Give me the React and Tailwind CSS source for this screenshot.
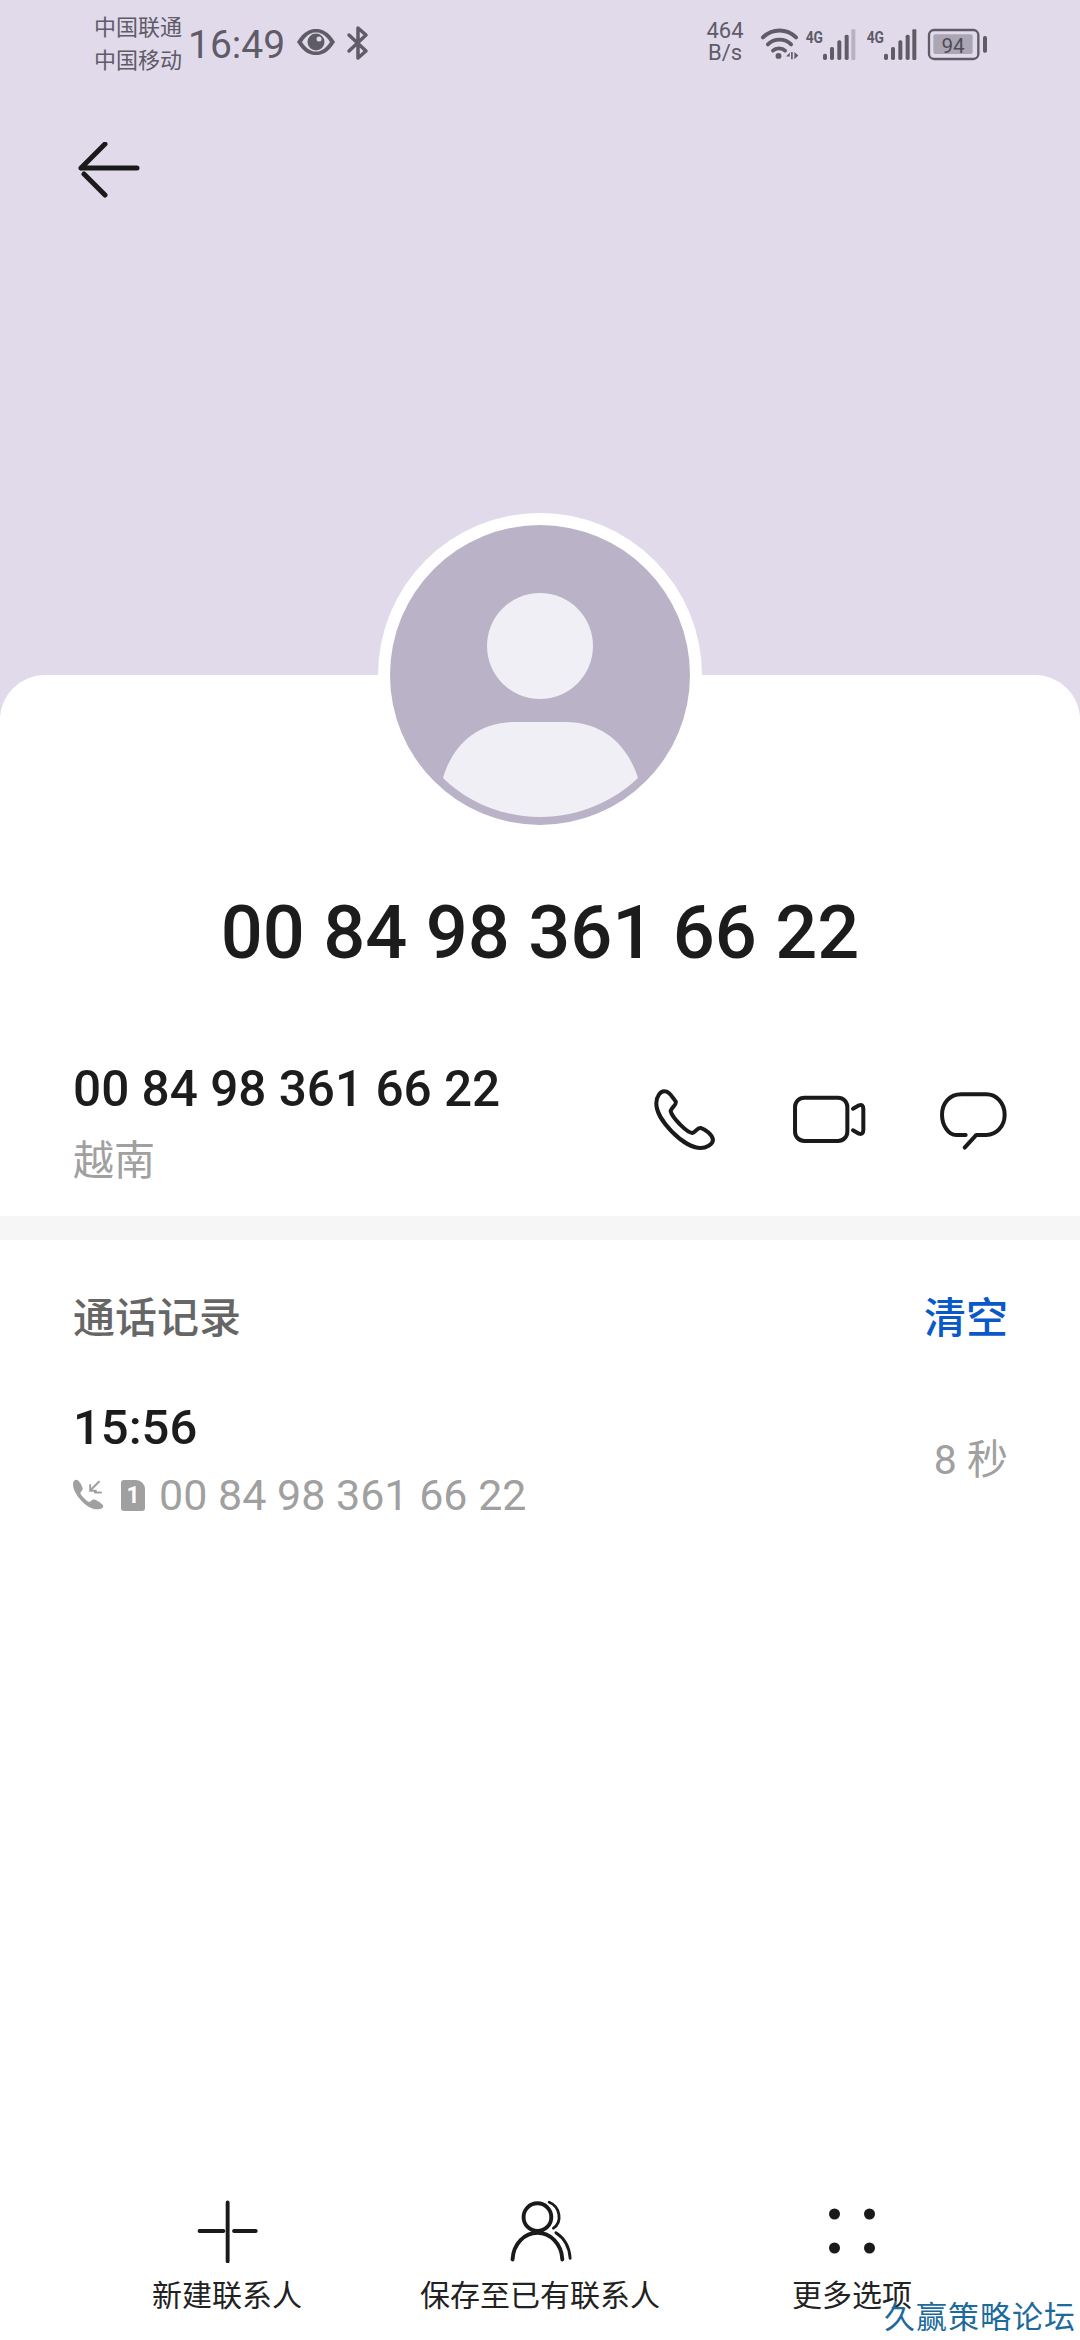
const Wifi = () => (
  <svg width="39" height="34" viewBox="232 75 118 102" className="shrink-0" fill="none">
    <path d="M241 106 C270 78 312 78 341 106" stroke="#5f5b67" strokeWidth="12" strokeLinecap="round" />
    <path d="M256 127 C275 108 307 108 326 127" stroke="#5f5b67" strokeWidth="12" strokeLinecap="round" />
    <path d="M271 146 C280 137 299 137 308 146" stroke="#5f5b67" strokeWidth="11" strokeLinecap="round" />
    <circle cx="288" cy="162" r="9" fill="#5f5b67" />
    <path d="M322 152 L311 164 H322 Z M326 150 H331 V172 H326 Z M336 150 L348 161 L336 172 Z" fill="#5f5b67" />
  </svg>
);

const Signal = ({ last }) => (
  <svg width="53" height="34" viewBox="366 73 159 102" className="shrink-0">
    <text x="371" y="120" fontSize="48" fontWeight="700" fill="#5f5b67" fontFamily="Roboto, sans-serif" textLength="52" lengthAdjust="spacingAndGlyphs">4G</text>
    <rect x="423" y="153" width="12" height="19" rx="5" fill="#5f5b67" />
    <rect x="444" y="133" width="12" height="39" rx="5" fill="#5f5b67" />
    <rect x="466" y="113" width="12" height="59" rx="5" fill="#5f5b67" />
    <rect x="488" y="96" width="12" height="76" rx="5" fill="#5f5b67" />
    <rect x="508" y="80" width="12" height="92" rx="3" fill={last} />
  </svg>
);

const Battery = () => (
  <svg width="61" height="34" viewBox="738 75 183 102" className="shrink-0">
    <rect x="744" y="84" width="148" height="87" rx="15" fill="none" stroke="#5f5b67" strokeWidth="7" />
    <rect x="757" y="97" width="118" height="59" rx="6" fill="#aaa6b3" />
    <rect x="906" y="102" width="12" height="50" rx="5" fill="#5f5b67" />
    <text x="816" y="152" fontSize="62" textAnchor="middle" fill="#4f4b57" fontFamily="Roboto, sans-serif">94</text>
  </svg>
);

const StatusBar = () => (
  <div className="flex h-[88px] items-center pl-[94px] pr-[92px] text-[#5f5b67]">
    <div className="flex w-[94px] flex-col text-[22px] leading-[33px] pb-[1px]">
      <span className="whitespace-nowrap">中国联通</span>
      <span className="whitespace-nowrap">中国移动</span>
    </div>
    <span className="text-[39px] leading-none w-[108px] pt-[2px]">16:49</span>
    <svg width="40" height="26" viewBox="0 0 40 26" className="shrink-0 mb-[4px]">
      <path d="M1 13 C8 2 14 0 20 0 C26 0 32 2 39 13 C32 24 26 26 20 26 C14 26 8 24 1 13 Z" fill="#5f5b67" />
      <path d="M6 13 C11 5 16 3.500 20 3.500 C24 3.500 29 5 34 13 C29 21 24 22.500 20 22.500 C16 22.500 11 21 6 13 Z" fill="#e1daeb" />
      <circle cx="20" cy="13" r="8.500" fill="#5f5b67" />
      <circle cx="23" cy="10" r="2.500" fill="#e1daeb" />
    </svg>
    <svg width="24" height="36" viewBox="0 0 24 36" className="shrink-0 ml-[10px] mb-[3px]" fill="none">
      <path d="M3 10 L20 26 L12 33 V3 L20 10 L3 26" stroke="#5f5b67" strokeWidth="3.500" strokeLinejoin="round" strokeLinecap="round" />
    </svg>
    <div className="ml-auto flex items-center">
      <div className="flex w-[44px] flex-col items-center text-[22px] leading-[22px] pb-[4px]">
        <span>464</span>
        <span>B/s</span>
      </div>
      <div className="ml-[13px]"><Wifi /></div>
      <div className="ml-[5px]"><Signal last="#b7b2c1" /></div>
      <div className="ml-[8px]"><Signal last="#5f5b67" /></div>
      <div className="ml-[9px]"><Battery /></div>
    </div>
  </div>
);

const CallIcons = () => (
  <div className="ml-auto flex items-start pt-[27px]">
    <svg width="63.300" height="63.300" viewBox="100 85 190 190" fill="none" stroke="#1a1a1a" strokeWidth="12" strokeLinejoin="round">
      <path d="M130 95 C145 95 150 105 165 125 C170 135 150 145 150 155 C155 175 200 220 215 220 C225 218 230 203 240 205 C255 210 275 225 277 240 C277 255 255 265 240 265 C190 265 105 180 107 130 C107 110 120 95 130 95 Z" />
    </svg>
    <svg width="76.700" height="63.300" viewBox="510 85 230 190" fill="none" stroke="#1a1a1a" strokeWidth="12" strokeLinecap="round" strokeLinejoin="round" className="ml-[74px]">
      <rect x="522" y="114" width="157" height="130" rx="28" />
      <path d="M696 147 L714 137 Q727 133 727 148 V210 Q727 226 714 222 L696 212" />
    </svg>
    <svg width="70" height="63.300" viewBox="950 85 210 190" fill="none" stroke="#1a1a1a" strokeWidth="12" strokeLinecap="round" strokeLinejoin="round" className="ml-[70px]">
      <path d="M1033 226 H1005 C980 226 962 195 962 165 C962 130 985 104 1020 104 H1095 C1125 104 1150 130 1150 165 C1150 200 1125 226 1095 226 H1065 L1030 264" />
    </svg>
  </div>
);

const Avatar = () => (
  <div className="mx-auto -mt-[162px] flex h-[324px] w-[324px] items-center justify-center rounded-full bg-white">
    <svg width="300" height="300" viewBox="0 0 300 300">
      <circle cx="150" cy="150" r="150" fill="#bab2c7" />
      <circle cx="150" cy="121" r="53" fill="#f0eff5" />
      <path d="M53 253 C62 222 85 197 125 197 H175 C215 197 238 222 248 253 C225 275 190 292 150 292 C110 292 75 275 53 253 Z" fill="#f0eff5" />
    </svg>
  </div>
);

const ActionBar = () => (
  <div className="mt-auto flex h-[148px] items-start pl-[152px] pt-[7px] text-[30px] leading-[36px] text-[#222]">
    <div className="flex w-[150px] flex-col items-center">
      <svg width="64" height="64" viewBox="185 65 180 180" fill="none" stroke="#1a1a1a" strokeWidth="11" strokeLinecap="round" className="ml-[2px]">
        <path d="M274 75 V240 M195 155 H262 M292 155 H353" />
      </svg>
      <span className="mt-[15px] whitespace-nowrap">新建联系人</span>
    </div>
    <div className="ml-[118px] flex w-[240px] flex-col items-center">
      <svg width="64" height="64" viewBox="1060 65 180 180" fill="none" stroke="#1a1a1a" strokeWidth="11" strokeLinecap="round" className="ml-[2px]">
        <circle cx="1140" cy="116" r="39" />
        <path d="M1070 235 C1072 190 1105 160 1140 160 C1175 160 1208 190 1210 235" />
        <path d="M1173 74 C1205 87 1210 130 1185 147" strokeWidth="8" />
        <path d="M1192 160 C1215 175 1230 200 1232 232" strokeWidth="8" />
      </svg>
      <span className="mt-[15px] whitespace-nowrap">保存至已有联系人</span>
    </div>
    <div className="ml-[132px] flex w-[120px] flex-col items-center">
      <svg width="64" height="64" viewBox="0 0 64 64" fill="#1a1a1a">
        <circle cx="14.500" cy="15" r="5.500" />
        <circle cx="49.500" cy="15" r="5.500" />
        <circle cx="14.500" cy="49" r="5.500" />
        <circle cx="49.500" cy="49" r="5.500" />
      </svg>
      <span className="mt-[15px] whitespace-nowrap">更多选项</span>
    </div>
  </div>
);

export default function App() {
  return (
    <div className="relative flex h-[2340px] w-[1080px] flex-col overflow-hidden bg-white font-['Roboto','Noto_Sans_CJK_SC',sans-serif]">
      <header className="h-[720px] bg-[#e1daeb]">
        <StatusBar />
        <div className="pl-[77px] pt-[54px]">
          <svg width="64" height="56" viewBox="0 0 64 56" fill="none" stroke="#1a1a1a" strokeWidth="5" strokeLinecap="round">
            <path d="M4 26 H60 M28 2 L4 26 M7 32 L28 53" />
          </svg>
        </div>
      </header>

      <main className="-mt-[45px] flex flex-1 flex-col rounded-t-[45px] bg-white">
        <Avatar />
        <h1 className="mt-[56px] text-center text-[74px] font-medium leading-[80px] text-[#1c1c1c]">00 84 98 361 66 22</h1>

        <section className="flex h-[243px] items-start pl-[73px] pr-[72px] pt-[88px]">
          <div>
            <div className="text-[49.500px] font-medium leading-[56px] text-[#1c1c1c]">00 84 98 361 66 22</div>
            <div className="mt-[19px] text-[41px] leading-[50px] text-[#a0a0a0]">越南</div>
          </div>
          <CallIcons />
        </section>

        <div className="h-[24px] bg-[#f6f6f6]" />

        <section className="flex items-center justify-between pl-[73px] pr-[72px] pt-[54px]">
          <span className="text-[42px] font-medium leading-[50px] text-[#666]">通话记录</span>
          <span className="text-[42px] font-medium leading-[50px] text-[#0a59c8]">清空</span>
        </section>

        <section className="flex items-center justify-between pl-[73px] pr-[72px] pt-[56px]">
          <div>
            <div className="text-[49px] font-medium leading-[56px] text-[#1c1c1c]">15:56</div>
            <div className="mt-[14px] flex items-center">
              <svg width="32" height="32" viewBox="75 288 95 95" fill="#a0a0a0">
                <path d="M84 290 C94 290 102 310 104 316 C104 322 96 326 97 331 C100 338 116 354 122 356 C128 356 132 348 137 348 C145 350 164 362 165 368 C165 376 152 378 145 378 C115 376 76 334 75 304 C75 296 78 291 84 290 Z" />
                <path d="M152 296 L126 322 M126 306 V323 H143 M140 328 H158" fill="none" stroke="#a0a0a0" strokeWidth="6" strokeLinecap="round" />
              </svg>
              <div className="ml-[16px] flex h-[31px] w-[24px] items-center justify-center rounded-[3px] rounded-tr-[9px] bg-[#a0a0a0] text-[23px] font-bold leading-none text-white">1</div>
              <span className="ml-[14px] text-[43px] leading-[50px] text-[#a0a0a0]">00 84 98 361 66 22</span>
            </div>
          </div>
          <span className="text-[41px] leading-[50px] text-[#a0a0a0]">8 秒</span>
        </section>

        <ActionBar />
      </main>

      <span className="absolute bottom-[4px] right-[4px] whitespace-nowrap text-[31px] leading-[36px] tracking-[1px] text-[#1d6b9c] font-['Liberation_Serif','Noto_Sans_CJK_SC',serif]">久赢策略论坛</span>
    </div>
  );
}
